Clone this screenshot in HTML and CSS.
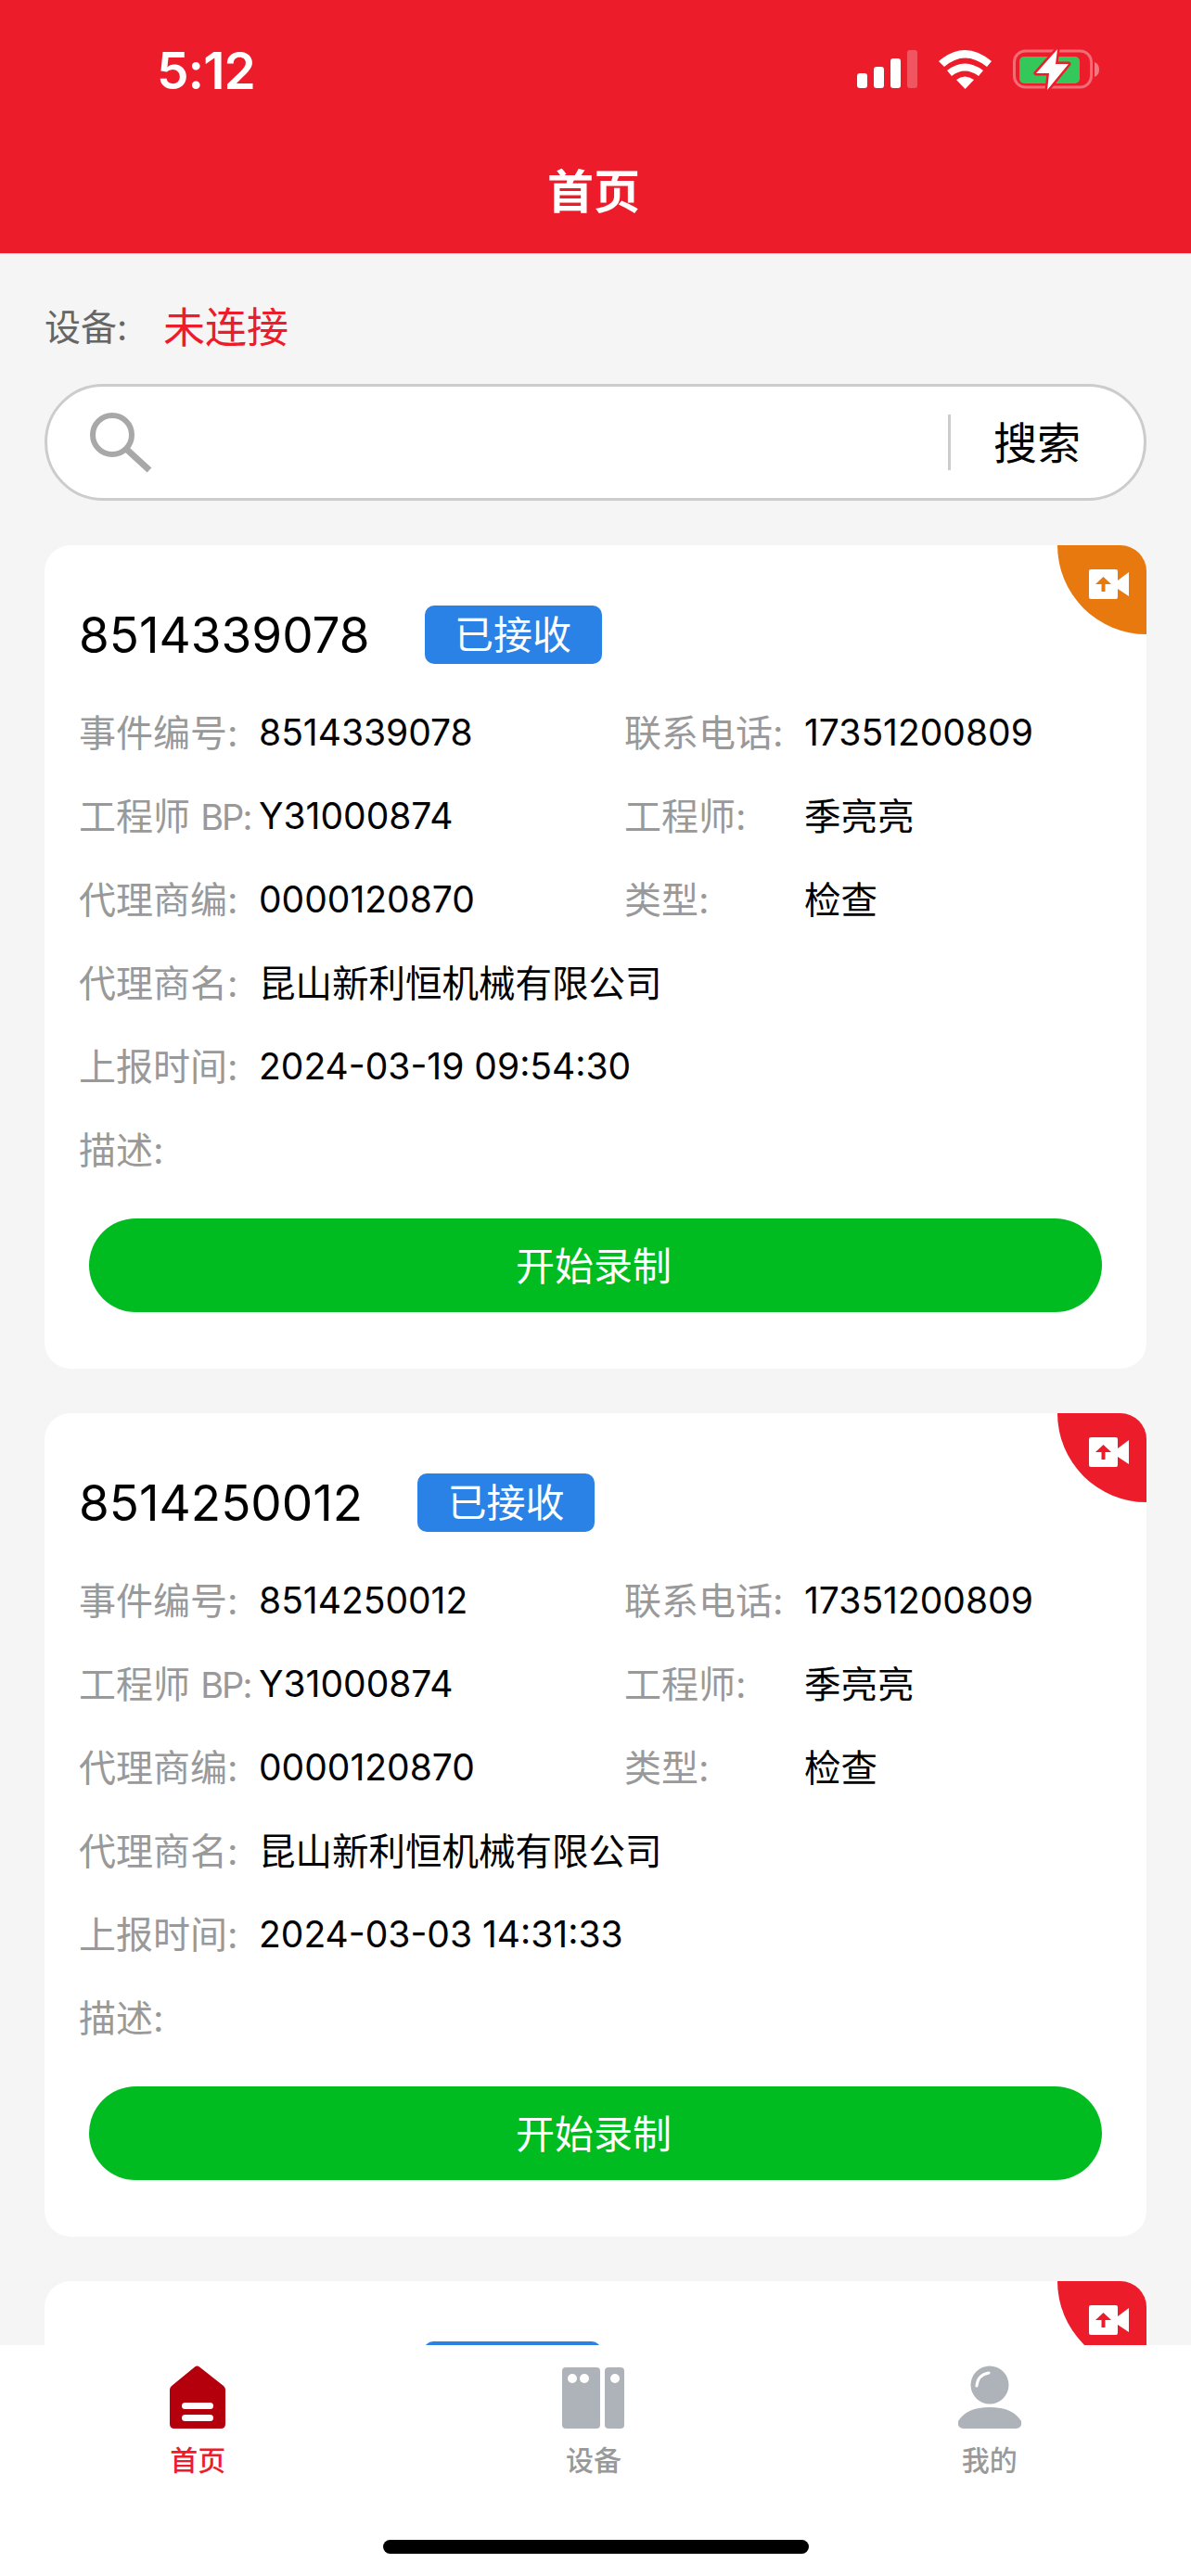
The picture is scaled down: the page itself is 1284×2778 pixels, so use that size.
FILE: index.html
```html
<!DOCTYPE html>
<html lang="zh-CN">
<head>
    <meta charset="UTF-8">
    <meta name="viewport" content="width=device-width, initial-scale=1.0">
    <title>首页</title>
    <link rel="stylesheet" href="styles.css">
</head>
<body>
    <header class="header">
        <div class="status-bar">
            <span class="time">5:12</span>
            <svg class="status-icons" width="262" height="44" viewBox="0 0 262 44">
                <rect x="0" y="26" width="11" height="16" rx="3" fill="#fff"/>
                <rect x="18" y="19" width="11" height="23" rx="3" fill="#fff"/>
                <rect x="36" y="10" width="11" height="32" rx="3" fill="#fff"/>
                <rect x="54" y="1" width="11" height="41" rx="3" fill="#fff" opacity="0.25"/>
                <path d="M88 13 Q116 -11 145 13 L140 19 Q116 0 94 19 Z" fill="#fff"/>
                <path d="M97 23 Q116 8 136 23 L131 29 Q116 18 102 29 Z" fill="#fff"/>
                <path d="M107 33 Q116 26 126 33 L116.500 43 Z" fill="#fff"/>
                <rect x="169.500" y="2" width="83" height="39" rx="12" fill="none" stroke="#fff" stroke-width="3" opacity="0.35"/>
                <rect x="175" y="8" width="65" height="29" rx="5" fill="#34c759"/>
                <path d="M256 14 Q261 16 261 22 Q261 28 256 30 Z" fill="#fff" opacity="0.4"/>
                <path d="M216 0 L193 26 L207 26 L205 44 L228 16 L214 16 Z" fill="#fff" stroke="#ed1c2b" stroke-width="5" stroke-linejoin="round" paint-order="stroke"/>
            </svg>
        </div>
        <h1 class="title">首页</h1>
    </header>

    <main class="content">
        <div class="device">
            <span class="device-label">设备:</span>
            <span class="device-state">未连接</span>
        </div>

        <div class="search">
            <svg class="search-icon" width="72" height="68" viewBox="0 0 72 68">
                <circle cx="26" cy="26" r="21" fill="none" stroke="#a8a8a8" stroke-width="6"/>
                <path d="M42 42 L66 64" stroke="#a8a8a8" stroke-width="7" fill="none"/>
            </svg>
            <span class="search-btn">搜索</span>
        </div>

        <section class="card">
            <div class="corner corner-orange">
                <svg width="43" height="32" viewBox="0 0 43 32">
                    <rect width="31" height="32" rx="2" fill="#fff"/>
                    <path d="M31 12 L43 3 V29 L31 21 Z" fill="#fff"/>
                    <path d="M15.500 8 L24 16 H17.500 V24 H13.500 V16 H7 Z" fill="#e8790f"/>
                </svg>
            </div>
            <div class="card-head">
                <span class="card-no">8514339078</span>
                <span class="tag">已接收</span>
            </div>
            <div class="row">
                <div class="field"><span class="label">事件编号:</span><span class="value">8514339078</span></div>
                <div class="field"><span class="label">联系电话:</span><span class="value">17351200809</span></div>
            </div>
            <div class="row">
                <div class="field"><span class="label">工程师 <span class="label-en">BP:</span></span><span class="value">Y31000874</span></div>
                <div class="field"><span class="label">工程师:</span><span class="value value-cn">季亮亮</span></div>
            </div>
            <div class="row">
                <div class="field"><span class="label">代理商编:</span><span class="value">0000120870</span></div>
                <div class="field"><span class="label">类型:</span><span class="value value-cn">检查</span></div>
            </div>
            <div class="row">
                <span class="label">代理商名:</span><span class="value value-cn">昆山新利恒机械有限公司</span>
            </div>
            <div class="row">
                <span class="label">上报时间:</span><span class="value">2024-03-19 09:54:30</span>
            </div>
            <div class="row">
                <span class="label">描述:</span>
            </div>
            <div class="record-btn">开始录制</div>
        </section>

        <section class="card">
            <div class="corner">
                <svg width="43" height="32" viewBox="0 0 43 32">
                    <rect width="31" height="32" rx="2" fill="#fff"/>
                    <path d="M31 12 L43 3 V29 L31 21 Z" fill="#fff"/>
                    <path d="M15.500 8 L24 16 H17.500 V24 H13.500 V16 H7 Z" fill="#ed1c2b"/>
                </svg>
            </div>
            <div class="card-head">
                <span class="card-no">8514250012</span>
                <span class="tag">已接收</span>
            </div>
            <div class="row">
                <div class="field"><span class="label">事件编号:</span><span class="value">8514250012</span></div>
                <div class="field"><span class="label">联系电话:</span><span class="value">17351200809</span></div>
            </div>
            <div class="row">
                <div class="field"><span class="label">工程师 <span class="label-en">BP:</span></span><span class="value">Y31000874</span></div>
                <div class="field"><span class="label">工程师:</span><span class="value value-cn">季亮亮</span></div>
            </div>
            <div class="row">
                <div class="field"><span class="label">代理商编:</span><span class="value">0000120870</span></div>
                <div class="field"><span class="label">类型:</span><span class="value value-cn">检查</span></div>
            </div>
            <div class="row">
                <span class="label">代理商名:</span><span class="value value-cn">昆山新利恒机械有限公司</span>
            </div>
            <div class="row">
                <span class="label">上报时间:</span><span class="value">2024-03-03 14:31:33</span>
            </div>
            <div class="row">
                <span class="label">描述:</span>
            </div>
            <div class="record-btn">开始录制</div>
        </section>

        <!-- third card, only its top shows above the tab bar -->
        <section class="card card-cut">
            <div class="corner">
                <svg width="43" height="32" viewBox="0 0 43 32">
                    <rect width="31" height="32" rx="2" fill="#fff"/>
                    <path d="M31 12 L43 3 V29 L31 21 Z" fill="#fff"/>
                    <path d="M15.500 8 L24 16 H17.500 V24 H13.500 V16 H7 Z" fill="#ed1c2b"/>
                </svg>
            </div>
            <div class="card-head">
                <span class="tag"></span>
            </div>
        </section>
    </main>

    <nav class="tabbar">
        <div class="tab tab-active">
            <svg width="68" height="68" viewBox="0 0 68 68">
                <path d="M31 1.500 Q33.500 -0.500 36 1.500 L62 22 Q64 24 64 26 V63 Q64 68 59 68 H9 Q4 68 4 63 V26 Q4 24 6 22 Z" fill="#b3000c"/>
                <rect x="17" y="40" width="34" height="7" rx="3.500" fill="#fff"/>
                <rect x="17" y="53" width="34" height="7" rx="3.500" fill="#fff"/>
            </svg>
            <span>首页</span>
        </div>
        <div class="tab">
            <svg width="68" height="68" viewBox="0 0 68 68">
                <rect x="0" y="2" width="41" height="66" rx="4" fill="#aeb3ba"/>
                <rect x="46" y="2" width="21" height="66" rx="4" fill="#aeb3ba"/>
                <circle cx="11" cy="14" r="5" fill="#fff"/>
                <circle cx="24" cy="14" r="5" fill="#fff"/>
                <circle cx="57" cy="14" r="5" fill="#fff"/>
            </svg>
            <span>设备</span>
        </div>
        <div class="tab">
            <svg width="70" height="68" viewBox="0 0 70 68">
                <circle cx="35" cy="21" r="20.500" fill="#aeb3ba"/>
                <path d="M21 22 Q22 10 34 8" fill="none" stroke="#fff" stroke-width="3" stroke-linecap="round"/>
                <path d="M1 60 Q10 45 35 45 Q60 45 69 60 Q70 68 63 68 H7 Q0 68 1 60 Z" fill="#aeb3ba"/>
            </svg>
            <span>我的</span>
        </div>
        <div class="home-bar"></div>
    </nav>
</body>
</html>
```

FILE: styles.css
```css
* {
    box-sizing: border-box;
}

html, body {
    height: 100%;
}

body {
    margin: 0;
    display: flex;
    flex-direction: column;
    overflow: hidden;
    background: #f5f5f5;
    color: #000;
    font-family: Inter, "Noto Sans CJK SC", sans-serif;
}

.header {
    height: 274px;
    flex-shrink: 0;
    background: #ed1c2b;
    color: #fff;
    border-bottom: 1px solid #d8d8d8;
}

.status-bar {
    height: 150px;
    padding: 0 98px 0 169px;
    display: flex;
    align-items: center;
    justify-content: space-between;
}

.time {
    margin-top: 2px;
    font-size: 55px;
    font-weight: 600;
    letter-spacing: -1px;
}

.status-icons {
    display: block;
}

.title {
    margin: 0;
    height: 114px;
    padding-right: 4px;
    line-height: 114px;
    text-align: center;
    font-size: 50px;
    font-weight: 700;
}

.content {
    flex: 1;
    min-height: 0;
    overflow: hidden;
    padding: 46px 48px 0;
}

.device {
    height: 60px;
    margin-bottom: 34px;
    display: flex;
    align-items: center;
}

.device-label {
    width: 128px;
    font-size: 39px;
    color: #666;
}

.device-state {
    font-size: 45px;
    color: #ed1c2b;
}

.search {
    height: 126px;
    margin-bottom: 48px;
    padding-left: 44px;
    display: flex;
    align-items: center;
    background: #fff;
    border: 3px solid #ccc;
    border-radius: 63px;
}

.search-btn {
    margin-left: auto;
    margin-right: 68px;
    padding-left: 46px;
    border-left: 3px solid #ccc;
    height: 60px;
    line-height: 62px;
    font-size: 47px;
}

.card {
    position: relative;
    height: 888px;
    margin-bottom: 48px;
    padding: 65px 48px 0 37px;
    background: #fff;
    border-radius: 28px;
    overflow: hidden;
}

.corner {
    position: absolute;
    top: 0;
    right: 0;
    width: 96px;
    height: 96px;
    padding: 26px 0 0 34px;
    background: #ed1c2b;
    border-bottom-left-radius: 96px;
}

.corner svg {
    display: block;
}

.corner-orange {
    background: #e8790f;
}

.card-head {
    height: 63px;
    margin-bottom: 28px;
    display: flex;
    align-items: center;
}

.card-no {
    font-size: 53px;
    margin-right: 59px;
}

.tag {
    width: 191px;
    height: 63px;
    line-height: 63px;
    text-align: center;
    background: #2b82e6;
    color: #fff;
    font-size: 42px;
    border-radius: 10px;
}

.card-cut .tag {
    margin-left: 372px;
}

.row {
    height: 90px;
    display: flex;
    align-items: center;
    font-size: 39px;
}

.field {
    flex: none;
    width: 588px;
    display: flex;
    align-items: center;
}

.label {
    width: 194px;
    flex-shrink: 0;
    padding-bottom: 3px;
    color: #999;
    font-size: 40px;
    white-space: nowrap;
}

.label-en {
    font-size: 38px;
    letter-spacing: -2px;
}

.value {
    color: #000;
    white-space: nowrap;
}

.value-cn {
    padding-bottom: 3px;
    font-size: 39.5px;
}

.record-btn {
    height: 101px;
    margin: 30px 0 0 11px;
    padding: 1px 4px 0 0;
    line-height: 101px;
    text-align: center;
    background: #00bc21;
    color: #fff;
    font-size: 42px;
    border-radius: 51px;
}

.tabbar {
    position: relative;
    height: 249px;
    flex-shrink: 0;
    padding: 22px 4px 0 0;
    display: flex;
    align-items: flex-start;
    background: #fff;
}

.tab {
    flex: 1;
    display: flex;
    flex-direction: column;
    align-items: center;
    gap: 14px;
    color: #999;
    font-size: 30px;
    font-weight: 500;
    line-height: 40px;
}

.tab svg {
    display: block;
}

.tab-active {
    color: #ed1c2b;
}

.home-bar {
    position: absolute;
    left: 413px;
    bottom: 24px;
    width: 459px;
    height: 15px;
    background: #000;
    border-radius: 8px;
}
```
